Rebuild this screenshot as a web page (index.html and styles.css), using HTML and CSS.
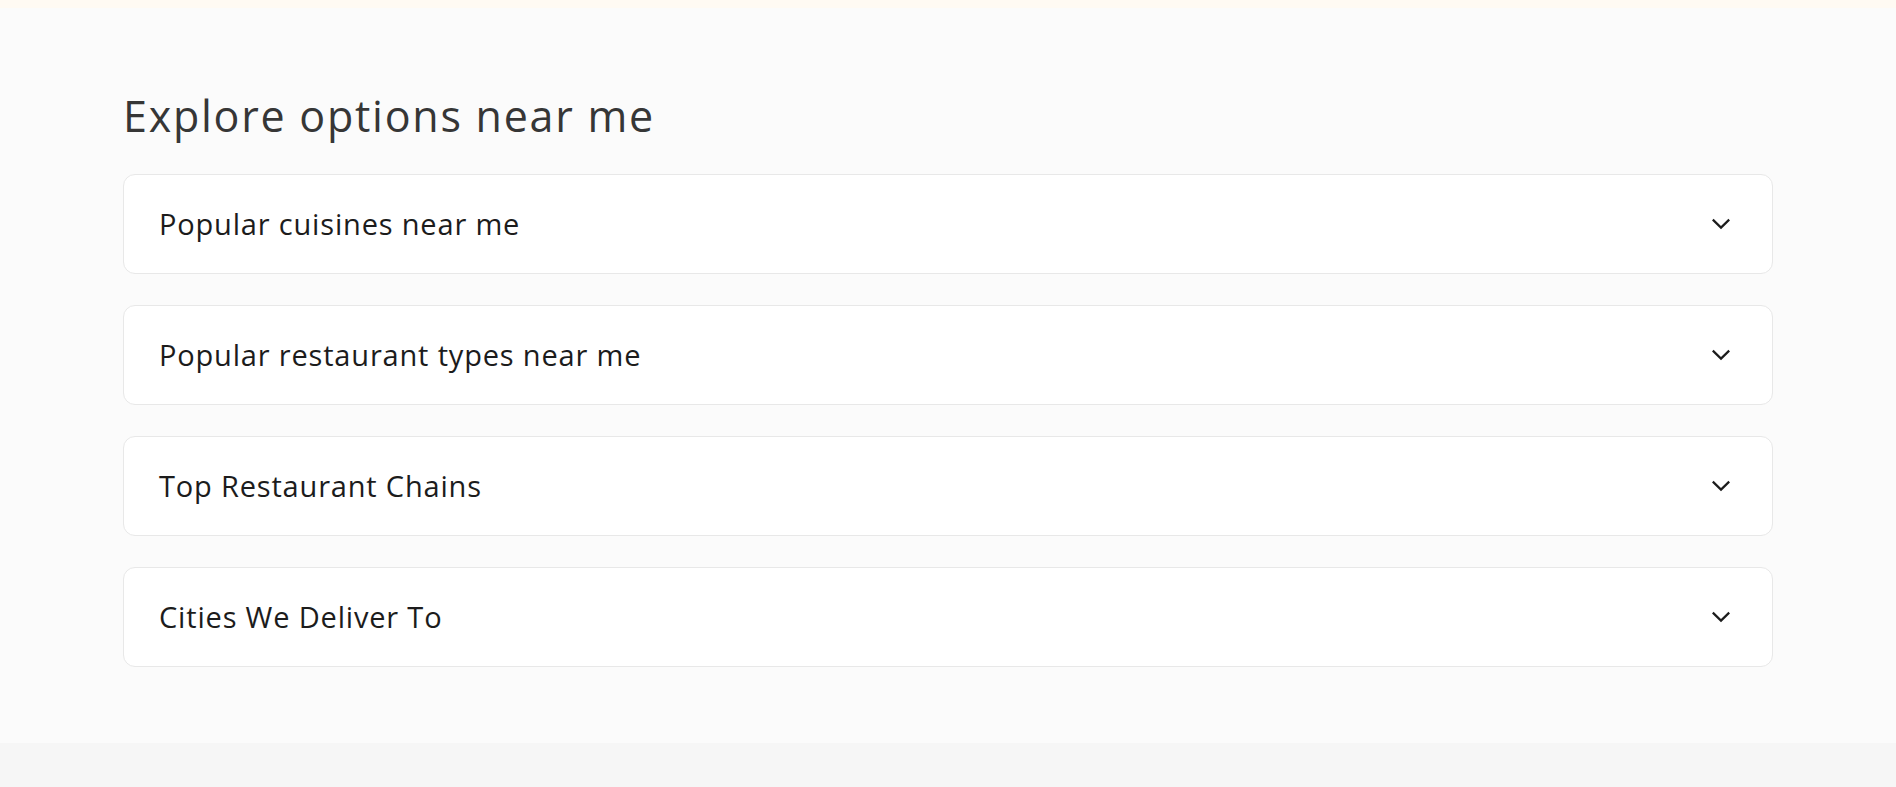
FILE: index.html
```html
<!DOCTYPE html>
<html lang="en">
<head>
<meta charset="utf-8">
<title>Explore options near me</title>
<link rel="stylesheet" href="styles.css">
</head>
<body>
<div class="topbar"></div>
<section class="explore">
  <div class="container">
    <h2 class="title">Explore options near me</h2>
    <div class="list">
      <div class="item">
        <span class="label">Popular cuisines near me</span>
        <svg class="chev" width="20" height="12" viewBox="0 0 20 12"><polyline points="1.8,1.6 10,9.6 18.2,1.6" fill="none" stroke="#1c1c1c" stroke-width="2.2"/></svg>
      </div>
      <div class="item">
        <span class="label">Popular restaurant types near me</span>
        <svg class="chev" width="20" height="12" viewBox="0 0 20 12"><polyline points="1.8,1.6 10,9.6 18.2,1.6" fill="none" stroke="#1c1c1c" stroke-width="2.2"/></svg>
      </div>
      <div class="item">
        <span class="label">Top Restaurant Chains</span>
        <svg class="chev" width="20" height="12" viewBox="0 0 20 12"><polyline points="1.8,1.6 10,9.6 18.2,1.6" fill="none" stroke="#1c1c1c" stroke-width="2.2"/></svg>
      </div>
      <div class="item">
        <span class="label">Cities We Deliver To</span>
        <svg class="chev" width="20" height="12" viewBox="0 0 20 12"><polyline points="1.8,1.6 10,9.6 18.2,1.6" fill="none" stroke="#1c1c1c" stroke-width="2.2"/></svg>
      </div>
    </div>
  </div>
</section>
<div class="bottom"></div>
</body>
</html>
```
FILE: styles.css
```css
html, body {
  margin: 0;
  padding: 0;
}
body {
  background: #f6f6f6;
  font-family: "Open Sans", Lato, sans-serif;
}
.topbar {
  height: 8px;
  background: #fffaf3;
}
.explore {
  background: #fbfbfb;
  padding: 82px 0 76px;
}
.container {
  width: 1650px;
  margin: 0 auto;
}
.title {
  margin: 0 0 32px;
  font-size: 43px;
  line-height: 52px;
  font-weight: 400;
  color: #363636;
  letter-spacing: 1.75px;
}
.list {
  display: flex;
  flex-direction: column;
  gap: 31px;
}
.item {
  box-sizing: border-box;
  height: 100px;
  background: #ffffff;
  border: 1px solid #e8e8e8;
  border-radius: 12px;
  display: flex;
  align-items: center;
  justify-content: space-between;
  padding: 0 41px 0 35px;
}
.label {
  font-size: 29px;
  color: #1c1c1c;
  line-height: 36px;
  letter-spacing: 0.82px;
}
.chev {
  display: block;
}
```
